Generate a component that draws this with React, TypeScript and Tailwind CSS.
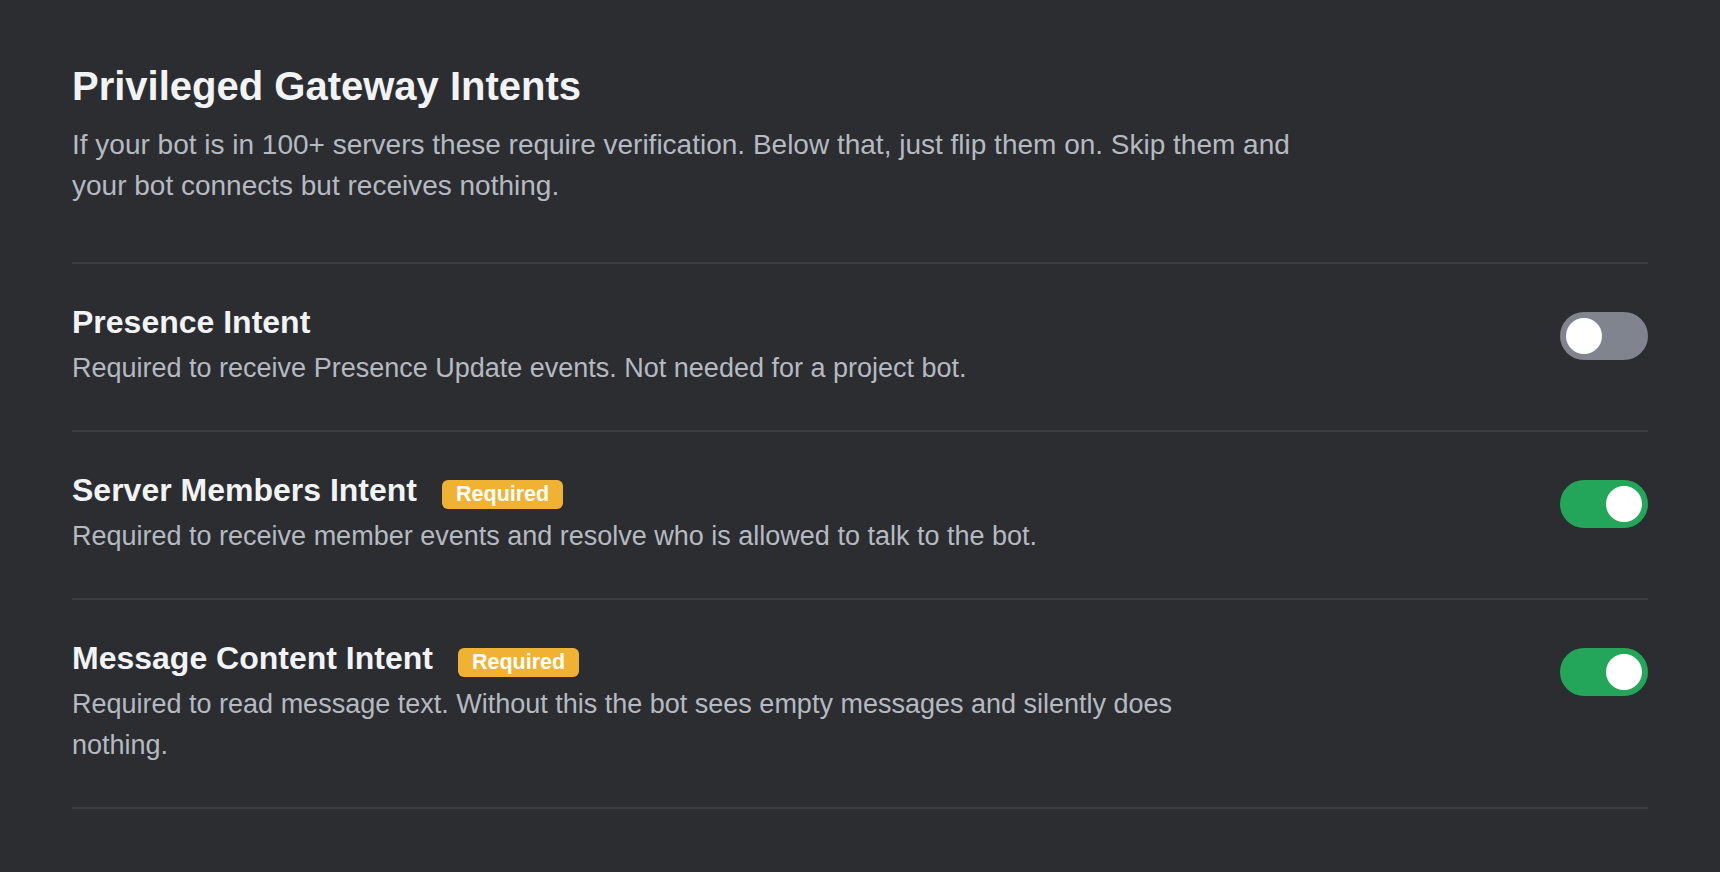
import { useState } from 'react'

type Intent = {
  id: string
  title: string
  description: string
  required: boolean
  enabled: boolean
}

const intents: Intent[] = [
  {
    id: 'presence',
    title: 'Presence Intent',
    description: 'Required to receive Presence Update events. Not needed for a project bot.',
    required: false,
    enabled: false,
  },
  {
    id: 'members',
    title: 'Server Members Intent',
    description: 'Required to receive member events and resolve who is allowed to talk to the bot.',
    required: true,
    enabled: true,
  },
  {
    id: 'content',
    title: 'Message Content Intent',
    description: 'Required to read message text. Without this the bot sees empty messages and silently does nothing.',
    required: true,
    enabled: true,
  },
]

function Toggle({ on, onClick }: { on: boolean; onClick: () => void }) {
  return (
    <button
      onClick={onClick}
      className={`mt-[10px] flex h-[48px] w-[88px] shrink-0 items-center rounded-full px-[6px] transition-colors ${
        on ? 'justify-end bg-[#23a55a]' : 'justify-start bg-[#80848e]'
      }`}
    >
      <span className="block h-[36px] w-[36px] rounded-full bg-white" />
    </button>
  )
}

export default function App() {
  const [state, setState] = useState<Record<string, boolean>>(
    Object.fromEntries(intents.map(i => [i.id, i.enabled]))
  )

  return (
    <main
      className="min-h-screen bg-[#2b2d31] px-[72px] pt-[62px]"
      style={{ fontFamily: '"Liberation Sans", Arial, Helvetica, sans-serif' }}
    >
      <div className="pb-[56px]">
        <h1 className="text-[40px] font-bold leading-[48px] text-[#f2f3f5]">Privileged Gateway Intents</h1>
        <p className="mt-[14px] max-w-[1250px] text-[28px] leading-[41px] text-[#b5bac1]">
          If your bot is in 100+ servers these require verification. Below that, just flip them on. Skip them and
          your bot connects but receives nothing.
        </p>
      </div>

      <div className="border-t-2 border-[#3c3e44]">
        {intents.map(intent => (
          <div
            key={intent.id}
            className="flex items-start justify-between border-b-2 border-[#3c3e44] pt-[38px] pb-[41px]"
          >
            <div className="max-w-[1150px]">
              <div className="flex items-baseline gap-[25px]">
                <h2 className="text-[32px] font-bold leading-[40px] text-[#f2f3f5]">{intent.title}</h2>
                {intent.required && (
                  <span className="rounded-[6px] bg-[#f0b232] px-[14px] text-[21.5px] font-bold leading-[29px] text-white">
                    Required
                  </span>
                )}
              </div>
              <p className="mt-[6px] text-[27px] leading-[41px] text-[#b5bac1]">{intent.description}</p>
            </div>
            <Toggle
              on={state[intent.id]}
              onClick={() => setState(s => ({ ...s, [intent.id]: !s[intent.id] }))}
            />
          </div>
        ))}
      </div>
    </main>
  )
}
